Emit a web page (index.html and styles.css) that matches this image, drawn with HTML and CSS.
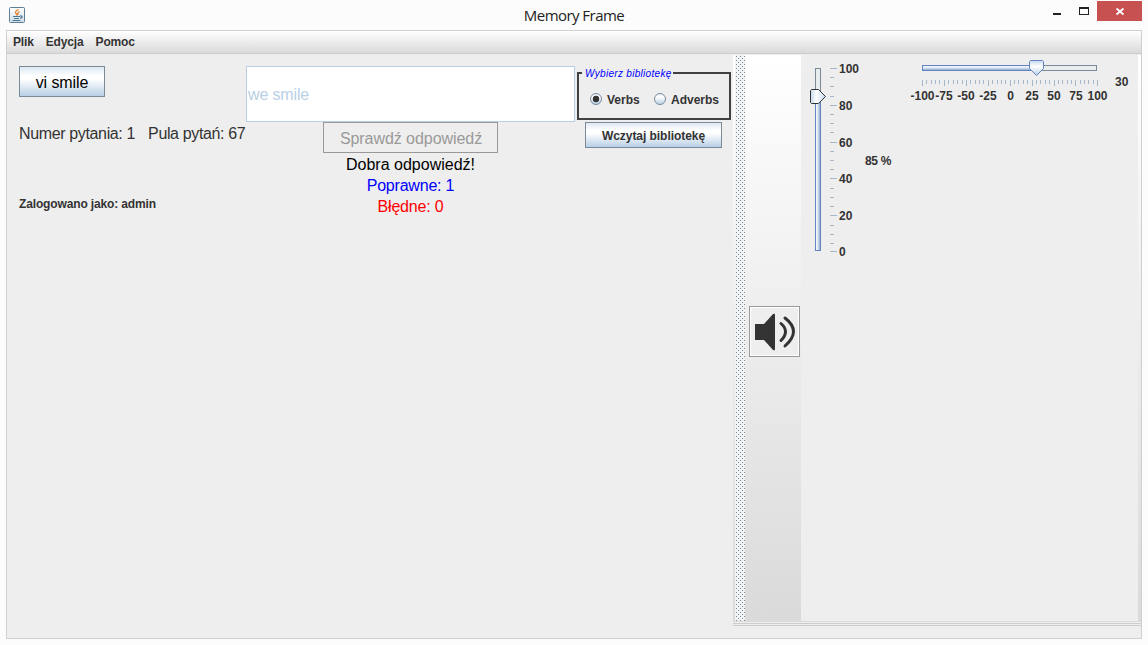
FILE: index.html
```html
<!DOCTYPE html>
<html lang="pl">
<head>
<meta charset="utf-8">
<title>Memory Frame</title>
<link rel="stylesheet" href="styles.css">
</head>
<body>
<header class="titlebar">
  <svg class="app-icon" width="16" height="16" viewBox="0 0 16 16">
    <defs><linearGradient id="ic" x1="0" y1="0" x2="0" y2="1"><stop offset="0" stop-color="#fff"/><stop offset="1" stop-color="#cfdde6"/></linearGradient></defs>
    <rect x=".5" y=".5" width="15" height="15" rx="1" fill="url(#ic)" stroke="#5f7f94"/>
    <path d="M9.500 2.500Q5 5 7 6.500T7.500 8.500M10.500 4.500Q8 6 9 8" fill="none" stroke="#e37a22" stroke-width="1.200"/>
    <path d="M4 9.500h7M5 11.500h5M3.500 13.500h8M11 9c3-.5 2.500 2 .2 2.300" fill="none" stroke="#4d7891" stroke-width="1.200"/>
  </svg>
  <h1 class="title">Memory Frame</h1>
  <div class="controls">
    <svg width="95" height="21" viewBox="0 0 95 21">
      <rect x="6" y="13" width="8" height="2" fill="#222"/>
      <path d="M32 7h10v8H32zM33 9v5h8V9z" fill="#222" fill-rule="evenodd"/>
      <rect x="50" y="1" width="45" height="20" fill="#c75050"/>
    </svg>
    <svg class="close" width="45" height="20" viewBox="0 0 45 20"><path d="M19.500 7.500l7 6M26.500 7.500l-7 6" stroke="#fff" stroke-width="1.800" fill="none"/></svg>
  </div>
</header>
<main class="frame">
  <nav class="menubar"><span>Plik</span><span>Edycja</span><span>Pomoc</span></nav>
  <div class="body">
    <section class="quiz">
      <div class="col-info">
        <button class="btn btn-word">vi smile</button>
        <div class="counts"><span>Numer pytania: 1</span><span>Pula pytań: 67</span></div>
        <div class="login">Zalogowano jako: admin</div>
      </div>
      <div class="col-answer">
        <div class="field">we smile</div>
        <button class="btn-check" disabled>Sprawdź odpowiedź</button>
        <div class="line">Dobra odpowiedź!</div>
        <div class="line good">Poprawne: 1</div>
        <div class="line bad">Błędne: 0</div>
      </div>
      <div class="col-lib">
        <div class="group">
          <span class="group-title">Wybierz bibliotekę</span>
          <svg class="radio" width="12" height="12" viewBox="0 0 12 12"><defs><linearGradient id="rg" x1="0" y1="0" x2="0" y2="1"><stop offset="0" stop-color="#dde8f3"/><stop offset=".3" stop-color="#fff"/><stop offset="1" stop-color="#b8cfe5"/></linearGradient></defs><circle cx="6" cy="6" r="5.500" fill="url(#rg)" stroke="#7a8a99"/><circle cx="6" cy="6" r="3.200" fill="#333"/></svg>
          <span class="option verbs">Verbs</span>
          <svg class="radio" width="12" height="12" viewBox="0 0 12 12"><circle cx="6" cy="6" r="5.500" fill="url(#rg)" stroke="#7a8a99"/></svg>
          <span class="option">Adverbs</span>
        </div>
        <button class="btn btn-load">Wczytaj bibliotekę</button>
      </div>
    </section>
    <section class="side">
      <div class="toolbar">
        <div class="grip"><svg width="10" height="566"><defs><pattern id="dots" width="4" height="4" patternUnits="userSpaceOnUse"><rect width="4" height="4" fill="#f1f3f4"/><rect x="1" y="1" width="1" height="1" fill="#7a8a99"/><rect x="3" y="3" width="1" height="1" fill="#7a8a99"/></pattern></defs><rect width="10" height="566" fill="url(#dots)"/></svg></div>
        <button class="sound"><svg width="49" height="49" viewBox="0 0 49 49">
          <path d="M5 17h9L23 7q2-1 2 1v34q0 2-2 1L14 33H5z" fill="#333"/>
          <path d="M31 17q9 8 0 17M35 11.500q17 13 0 28" transform="translate(0 -.5)" fill="none" stroke="#333" stroke-width="3" stroke-linecap="round"/>
        </svg></button>
        <div class="sliders">
          <svg class="vslider" width="60" height="200" viewBox="801 60 60 200">
            <defs>
              <linearGradient id="vf"><stop offset="0" stop-color="#fff"/><stop offset=".35" stop-color="#e9f1f9"/><stop offset="1" stop-color="#82a2c8"/></linearGradient>
              <linearGradient id="vt"><stop offset="0" stop-color="#c4d8ed"/><stop offset=".4" stop-color="#fff"/><stop offset="1" stop-color="#c4d8ed"/></linearGradient>
            </defs>
            <rect x="815.5" y="68.5" width="5" height="182" fill="#e8eeee" stroke="#7a8a99"/>
            <rect x="815.5" y="97.5" width="5" height="153" fill="url(#vf)" stroke="#6382bf"/>
            <path d="M811.5 89.500h7l7 7-7 7h-7l-1-1v-12z" fill="url(#vt)" stroke="#333"/>
            <path d="M830 68.500h7m-7 37h7m-7 37h7m-7 36h7m-7 37h7m-7 36h7M830 77.500h4m-4 9h4m-4 10h4m-4 18h4m-4 9h4m-4 9h4m-4 19h4m-4 9h4m-4 9h4m-4 19h4m-4 9h4m-4 9h4m-4 19h4m-4 9h4m-4 9h4" stroke="#a3b8cc" fill="none"/>
            <g class="tick-text"><text x="839" y="73">100</text><text x="839" y="110">80</text><text x="839" y="147">60</text><text x="839" y="183">40</text><text x="839" y="220">20</text><text x="839" y="256">0</text></g>
          </svg>
          <span class="percent">85 %</span>
          <svg class="hslider" width="205" height="50" viewBox="907 55 205 50">
            <defs>
              <linearGradient id="hf" x1="0" y1="0" x2="0" y2="1"><stop offset="0" stop-color="#fff"/><stop offset=".4" stop-color="#e3edf7"/><stop offset="1" stop-color="#82a2c8"/></linearGradient>
              <linearGradient id="ht" x1="0" y1="0" x2="0" y2="1"><stop offset="0" stop-color="#c4d8ed"/><stop offset=".4" stop-color="#fff"/><stop offset="1" stop-color="#b8cfe5"/></linearGradient>
            </defs>
            <rect x="922.5" y="65.500" width="174" height="5" fill="#e8eeee" stroke="#7a8a99"/>
            <rect x="922.5" y="65.500" width="114" height="5" fill="url(#hf)" stroke="#6382bf"/>
            <path d="M1030.5 60.500h12l1 1v7l-7 7-7-7v-7z" fill="url(#ht)" stroke="#6382bf"/>
            <path d="M926.5 80v4m5-4v4m4-4v4m4-4v4m9-4v4m5-4v4m4-4v4m5-4v4m8-4v4m5-4v4m4-4v4m4-4v4m9-4v4m5-4v4m4-4v4m4-4v4m9-4v4m4-4v4m5-4v4m4-4v4m9-4v4m4-4v4m5-4v4m4-4v4m9-4v4m4-4v4m5-4v4m4-4v4m9-4v4m4-4v4m4-4v4m5-4v4" stroke="#a3b8cc"/>
            <path d="M922.5 80v6m22-6v6m22-6v6m22-6v6m22-6v6m22-6v6m22-6v6m21-6v6m22-6v6" stroke="#a3b8cc"/>
            <g class="tick-text middle"><text x="922.5" y="100">-100</text><text x="944" y="100">-75</text><text x="966" y="100">-50</text><text x="988" y="100">-25</text><text x="1010.500" y="100">0</text><text x="1032" y="100">25</text><text x="1054" y="100">50</text><text x="1076" y="100">75</text><text x="1097.500" y="100">100</text></g>
          </svg>
          <span class="pan">30</span>
        </div>
      </div>
    </section>
  </div>
</main>
</body>
</html>
```

FILE: styles.css
```css
* { box-sizing: border-box; }
body {
  margin: 0;
  width: 1148px;
  height: 645px;
  overflow: hidden;
  background: #fcfcfc;
  color: #333;
  font: bold 12px/14px "Liberation Sans", Arial, sans-serif;
}
svg { display: block; flex: none; }
button { font: inherit; color: inherit; padding: 0; border-radius: 0; }
.titlebar { display: grid; grid-template-columns: 101px 1fr 101px; height: 30px; }
.app-icon { margin: 7px 0 0 9px; }
.title {
  margin: 4px 0 0;
  color: #222;
  font: 15px/22px "Open Sans", "Noto Sans", sans-serif;
  text-align: center;
  letter-spacing: -0.55px;
}
.controls { position: relative; }
.close { position: absolute; left: 50px; top: 1px; }
.frame {
  display: flex;
  flex-direction: column;
  width: 1136px;
  height: 609px;
  margin-left: 6px;
  border: 1px solid #d0d0d0;
  background: #eee;
}
.menubar {
  display: flex;
  gap: 12px;
  height: 23px;
  padding: 4px 6px 0;
  border-bottom: 1px solid #ccc;
  background: linear-gradient(#fff, #dadada);
  letter-spacing: -0.15px;
}
.body { display: flex; flex: 1; }
.quiz { display: grid; grid-template-columns: 227px 331px 154px; align-items: start; width: 726px; padding: 12px 0 0 12px; }
.btn { border: 1px solid #7a8a99; background: linear-gradient(#dde8f3, #fff 30%, #fff 42%, #b8cfe5); }
.btn-word { display: block; width: 86px; height: 31px; padding-top: 2px; color: #000; font-size: 16px; font-weight: normal; letter-spacing: -0.1px; }
.counts { display: flex; gap: 13px; margin-top: 28px; font-size: 16px; line-height: 18px; font-weight: normal; white-space: nowrap; letter-spacing: -0.36px; }
.login { margin-top: 54px; letter-spacing: -0.14px; }
.col-answer { display: flex; flex-direction: column; align-items: center; width: 329px; font-size: 16px; font-weight: normal; }
.field { width: 329px; height: 56px; padding: 1px; border: 1px solid #b8cfe5; background: #fff; color: #b8cfe5; line-height: 53px; letter-spacing: -0.15px; }
.btn-check { width: 175px; height: 31px; padding: 2px 0 0 1px; border: 1px solid #999; background: #eee; color: #999; letter-spacing: -0.06px; }
.line { height: 21px; line-height: 23px; color: #000; }
.line.good { color: #00f; letter-spacing: -0.2px; }
.line.bad { color: #f00; letter-spacing: -0.2px; }
.col-lib { display: flex; flex-direction: column; padding-top: 6px; }
.group { position: relative; display: flex; align-items: center; height: 48px; padding: 6px 0 0 11px; border: 2px solid #404040; }
.group-title {
  position: absolute;
  left: 3px;
  top: -6px;
  width: 91px;
  padding-left: 3px;
  background: #eee;
  color: #00f;
  font: italic 10px/12px "Liberation Sans", Arial, sans-serif;
  letter-spacing: 0.3px;
  white-space: nowrap;
}
.radio { margin-right: 5px; }
.option { padding-top: 2px; }
.verbs { width: 47px; }
.btn-load { width: 137px; height: 26px; margin: 2px 0 0 8px; padding-top: 2px; letter-spacing: -0.05px; }
.side { width: 408px; height: 572px; padding-top: 1px; background: linear-gradient(#ccc, #ccc) 0 569px / 100% 1px no-repeat, linear-gradient(#ccc, #ccc) 0 571px / 100% 1px no-repeat, #eee; }
.toolbar { display: flex; height: 567px; padding: 0 3px 0 2px; border-bottom: 1px solid #dadada; background: linear-gradient(#fff, #dadada); }
.grip { width: 14px; }
.sound { width: 51px; height: 51px; margin-top: 251px; border: 1px solid #999; background: #eee; box-shadow: inset 0 0 0 1px #fff; }
.sliders { display: flex; align-items: flex-start; flex: 1; margin-left: 1px; background: #eee; }
.vslider { margin-top: 5px; }
.percent { width: 42px; margin: 99px 0 0 4px; white-space: nowrap; letter-spacing: -0.3px; }
.pan { margin: 20px 0 0 3px; }
.tick-text { font: bold 12px "Liberation Sans", Arial, sans-serif; fill: #333; }
.middle { text-anchor: middle; }
```
